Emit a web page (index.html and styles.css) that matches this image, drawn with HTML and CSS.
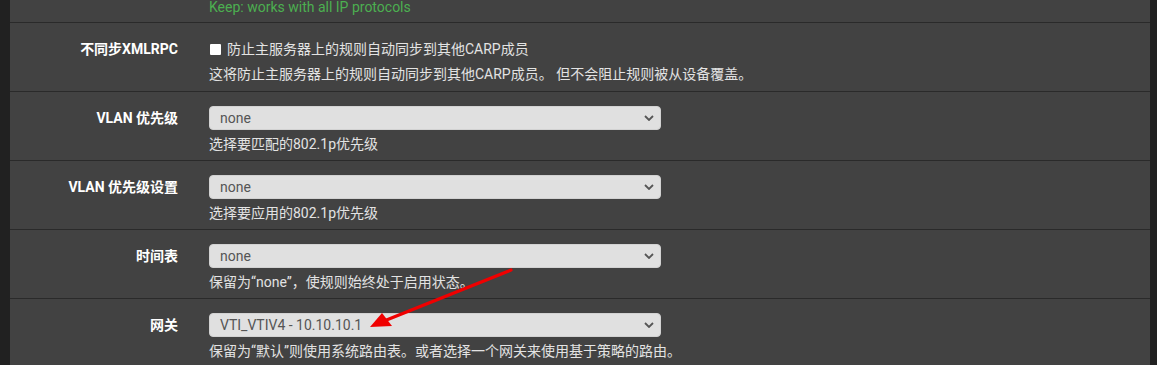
FILE: index.html
```html
<!DOCTYPE html>
<html lang="zh">
<head>
<meta charset="utf-8">
<link rel="stylesheet" href="styles.css">
</head>
<body>
<div class="frame">
  <div class="gutter-left"></div>
  <main class="panel">
    <div class="row row-top">
      <div class="label"></div>
      <div class="control"><div class="help green">Keep: works with all IP protocols</div></div>
    </div>

    <div class="row">
      <div class="label">不同步XMLRPC</div>
      <div class="control">
        <label class="check"><span class="box"></span>防止主服务器上的规则自动同步到其他CARP成员</label>
        <div class="help help-check">这将防止主服务器上的规则自动同步到其他CARP成员。 但不会阻止规则被从设备覆盖。</div>
      </div>
    </div>

    <div class="row">
      <div class="label">VLAN 优先级</div>
      <div class="control">
        <div class="select"><span>none</span><svg class="chev" viewBox="0 0 10 6" width="10" height="6"><path d="M1 1 L5 5 L9 1" fill="none" stroke="#555" stroke-width="1.8"/></svg></div>
        <div class="help">选择要匹配的802.1p优先级</div>
      </div>
    </div>

    <div class="row">
      <div class="label">VLAN 优先级设置</div>
      <div class="control">
        <div class="select"><span>none</span><svg class="chev" viewBox="0 0 10 6" width="10" height="6"><path d="M1 1 L5 5 L9 1" fill="none" stroke="#555" stroke-width="1.8"/></svg></div>
        <div class="help">选择要应用的802.1p优先级</div>
      </div>
    </div>

    <div class="row">
      <div class="label">时间表</div>
      <div class="control">
        <div class="select"><span>none</span><svg class="chev" viewBox="0 0 10 6" width="10" height="6"><path d="M1 1 L5 5 L9 1" fill="none" stroke="#555" stroke-width="1.8"/></svg></div>
        <div class="help">保留为“none”，使规则始终处于启用状态。</div>
      </div>
    </div>

    <div class="row last">
      <div class="label">网关</div>
      <div class="control">
        <div class="select"><span>VTI_VTIV4 - 10.10.10.1</span><svg class="chev" viewBox="0 0 10 6" width="10" height="6"><path d="M1 1 L5 5 L9 1" fill="none" stroke="#555" stroke-width="1.8"/></svg></div>
        <div class="help">保留为“默认”则使用系统路由表。或者选择一个网关来使用基于策略的路由。</div>
        <div class="help">网关选择对“IPV4 + IPV6”规则无效。</div>
      </div>
    </div>
  </main>
  <div class="gutter-right"></div>
</div>
<svg class="arrow" width="1157" height="365" viewBox="0 0 1157 365">
  <line x1="511" y1="270" x2="384" y2="321" stroke="#f00000" stroke-width="3.2" stroke-linecap="round"/>
  <polygon points="370,327 382,313 392,326" fill="#f00000"/>
</svg>
</body>
</html>
```

FILE: styles.css
```css
html, body {
  margin: 0;
  padding: 0;
  background: #212121;
  height: 365px;
  overflow: hidden;
}

body {
  font-family: Roboto, "Noto Sans CJK SC", sans-serif;
  font-size: 14px;
  color: #e3e3e3;
}

.frame {
  display: flex;
  height: 365px;
}

.gutter-left {
  width: 10px;
  flex: none;
  background: #212121;
}

.gutter-right {
  flex: 1;
  background: #212121;
}

.panel {
  width: 1140px;
  flex: none;
  background: #424242;
  display: flex;
  flex-direction: column;
  overflow: hidden;
}

.row {
  display: grid;
  grid-template-columns: 168px 452px;
  column-gap: 31px;
  border-bottom: 1px solid #2a2a2a;
  height: 69px;
  flex: none;
  box-sizing: border-box;
  padding-top: 14px;
}

.row.last {
  border-bottom: none;
  height: auto;
}

.row-top {
  height: 23px;
  padding-top: 0;
}

.row-top .help {
  margin-top: -3px;
}

.label {
  text-align: right;
  font-weight: 700;
  color: #ffffff;
  line-height: 20px;
  padding-top: 2px;
}

.control {
  display: flex;
  flex-direction: column;
}

.help {
  line-height: 21px;
  color: #e3e3e3;
  white-space: nowrap;
}

.select + .help {
  margin-top: 4px;
}

.help-check {
  margin-top: 5px;
}

.green {
  color: #4caf50;
}

.check {
  display: flex;
  align-items: center;
  line-height: 20px;
  height: 20px;
  color: #e3e3e3;
  padding-top: 2px;
}

.box {
  width: 11px;
  height: 11px;
  background: #ffffff;
  border-radius: 1px;
  margin-left: 1px;
  margin-right: 6px;
  flex: none;
}

.select {
  height: 24px;
  box-sizing: border-box;
  background: #e0e0e0;
  border: 1px solid #d2d2d2;
  border-radius: 4px;
  display: flex;
  align-items: center;
  justify-content: space-between;
  padding: 0 6px 0 10px;
  color: #555555;
  font-size: 14px;
}

.chev {
  display: block;
}

.arrow {
  position: absolute;
  left: 0;
  top: 0;
  pointer-events: none;
}
```
